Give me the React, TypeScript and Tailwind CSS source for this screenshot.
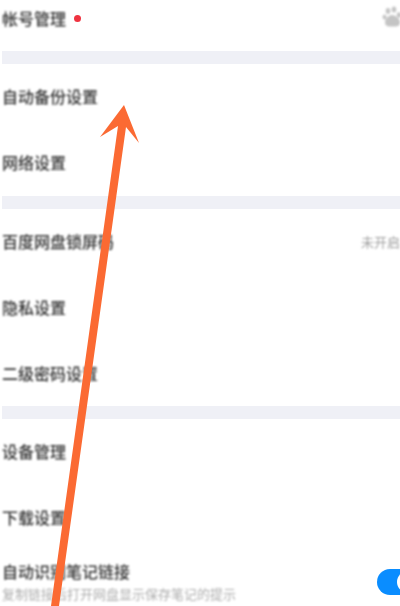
import type { ReactNode } from "react";

function Row({ label, h = "h-[66px]", children }: { label: string; h?: string; children?: ReactNode }) {
  return (
    <div className={`${h} flex items-center justify-between pl-[2px] pb-[2px] shrink-0`}>
      <span className="text-[16px] leading-none font-medium text-[#333333] blur-[0.8px]">{label}</span>
      {children}
    </div>
  );
}

function Band() {
  return <div className="h-[13px] ml-[2px] bg-[#eff0f6] shrink-0" />;
}

export default function App() {
  return (
    <div className="relative w-[400px] h-[606px] overflow-hidden bg-white font-['Noto_Sans_CJK_SC','Noto_Sans',sans-serif]">
      <div className="flex flex-col">
        <div className="h-[51px] flex items-start justify-between pl-[2px] pt-[10px] shrink-0">
          <span className="flex items-center text-[16px] leading-none font-medium text-[#333333]">
            <span className="blur-[0.8px]">帐号管理</span>
            <span className="ml-[8px] w-[7px] h-[7px] rounded-full bg-[#ef3340] blur-[0.4px]" />
          </span>
          <svg width="20" height="22" viewBox="0 0 20 22" className="mt-[-4px] mr-[-2px] blur-[1px] shrink-0" fill="#c4c4c4">
            <ellipse cx="6" cy="5" rx="2.300" ry="3" />
            <ellipse cx="12" cy="3.500" rx="2.300" ry="3" />
            <ellipse cx="2.500" cy="11" rx="2" ry="2.600" />
            <ellipse cx="17" cy="9" rx="2.300" ry="2.800" />
            <path d="M10 9c-3.500 0-7 4-7 7.500 0 2.500 2 4 4 4h6.500c2.500 0 4.500-1.500 4.500-4 0-3.500-4.500-7.500-8-7.500z" />
          </svg>
        </div>
        <Band />
        <Row label="自动备份设置" />
        <Row label="网络设置" />
        <Band />
        <Row label="百度网盘锁屏码">
          <span className="text-[13px] leading-none text-[#a0a0a0] blur-[0.8px]">未开启</span>
        </Row>
        <Row label="隐私设置" />
        <Row label="二级密码设置" h="h-[65px]" />
        <Band />
        <Row label="设备管理" />
        <Row label="下载设置" />
        <div className="flex items-start justify-between pl-[2px] pt-[13px]">
          <div className="flex flex-col">
            <span className="mt-[-1px] text-[16px] leading-none font-medium text-[#333333] blur-[0.8px]">自动识别笔记链接</span>
            <span className="mt-[8px] text-[13px] leading-none text-[#adadad] blur-[0.8px] whitespace-nowrap">复制链接后打开网盘显示保存笔记的提示</span>
          </div>
          <div className="mt-[5px] mr-[-24px] w-[47px] h-[26px] rounded-full bg-[#0a8dff] flex items-center justify-end pr-[5px] shrink-0 blur-[0.4px]">
            <div className="w-[22px] h-[22px] rounded-full bg-white" />
          </div>
        </div>
      </div>
      <svg className="absolute left-0 top-0 pointer-events-none" width="400" height="606" viewBox="0 0 400 606">
        <polygon fill="#fb6a33" points="124,105 139,143 126,127 59,606 51,606 118,126 100,137" />
      </svg>
    </div>
  );
}
